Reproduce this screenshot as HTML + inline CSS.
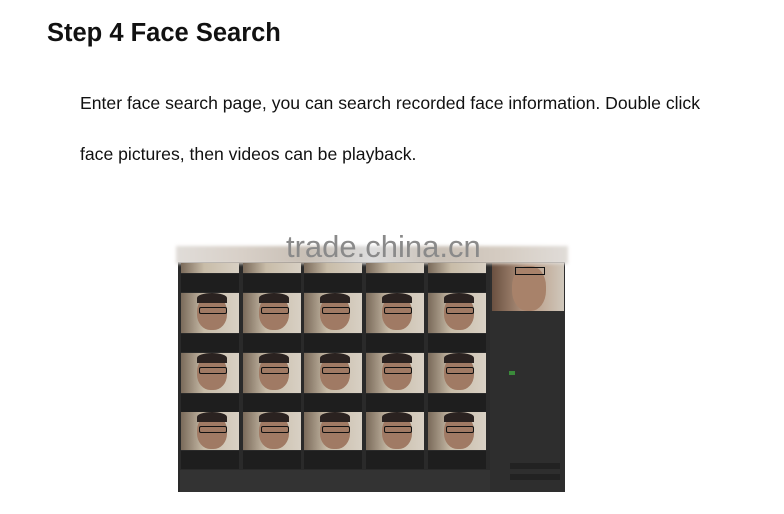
<!DOCTYPE html><html><head><style>
body{margin:0;width:784px;height:514px;background:#fff;position:relative;overflow:hidden;font-family:"Liberation Sans",sans-serif}
h1{position:absolute;left:47px;top:19px;margin:0;font-size:25.5px;font-weight:bold;color:#111}
p{position:absolute;left:80px;margin:0;font-size:17.6px;color:#111}
.shot{position:absolute;left:178px;top:262px;width:387px;height:230px;background:#2a2a2a}
.band{position:absolute;left:176px;top:246px;width:392px;height:18px;background:linear-gradient(90deg,#e0dcd8,#d8d0c8,#c8bfb5,#ddd,#c9c0b6,#d5ccc2,#e0dcd8);filter:blur(1.5px)}
.cell{position:absolute;width:58px}
.ph{position:absolute;left:0;top:0;width:58px;height:38px;background:linear-gradient(90deg,#7a6a5a,#c8bca8 40%,#d8d0c4)}
.face{position:absolute;left:16px;top:3px;width:30px;height:34px;border-radius:45%;background:#a07a64}
.hair{position:absolute;left:16px;top:0;width:30px;height:10px;border-radius:50% 50% 0 0;background:#2a2220}
.gl{position:absolute;left:18px;top:14px;width:26px;height:5px;border:1px solid #111;border-radius:2px}
.txt{position:absolute;left:0;top:39px;width:58px;height:18px;background:#1e1e1e}
.wm{position:absolute;left:286px;top:229px;font-size:31px;color:#8a8a8a;z-index:5}
.rp{position:absolute;left:490px;top:263px;width:75px;height:229px;background:#2e2e2e}
</style></head><body>
<h1>Step 4 Face Search</h1>
<p style="top:93px">Enter face search page, you can search recorded face information. Double click</p>
<p style="top:144px">face pictures, then videos can be playback.</p>
<div class="shot">
<div style="position:absolute;left:2px;top:208px;width:310px;height:22px;background:#333"></div>
</div>
<div class="rp">
<div style="position:absolute;left:2px;top:0;width:72px;height:48px;background:linear-gradient(90deg,#6a5040,#b89a84 50%,#d0c8bc)"></div>
<div style="position:absolute;left:22px;top:3px;width:34px;height:45px;border-radius:45%;background:#a8826a"></div>
<div style="position:absolute;left:25px;top:4px;width:28px;height:6px;border:1px solid #111"></div>
<div style="position:absolute;left:19px;top:108px;width:6px;height:4px;background:#3a8a3a"></div>
<div style="position:absolute;left:20px;top:200px;width:50px;height:6px;background:#222"></div>
<div style="position:absolute;left:20px;top:211px;width:50px;height:6px;background:#222"></div>
</div>
<div class="band"></div>
<div class="wm">trade.china.cn</div>
<div id="g"></div>
<script>
var g=document.getElementById('g'),h='';
var xs=[181,243,304,366,428],ys=[[263,273],[293,333],[353,393],[412,450]];
for(var r=0;r<4;r++)for(var c=0;c<5;c++){var y=ys[r][0],t=ys[r][1];
h+='<div class="cell" style="left:'+xs[c]+'px;top:'+y+'px"><div class="ph" style="height:'+(t-y)+'px">'+(r?'<div class="face"></div><div class="hair"></div><div class="gl"></div>':'')+'</div><div class="txt" style="top:'+(t-y+1)+'px"></div></div>';}
g.innerHTML=h;
</script>
</body></html>
